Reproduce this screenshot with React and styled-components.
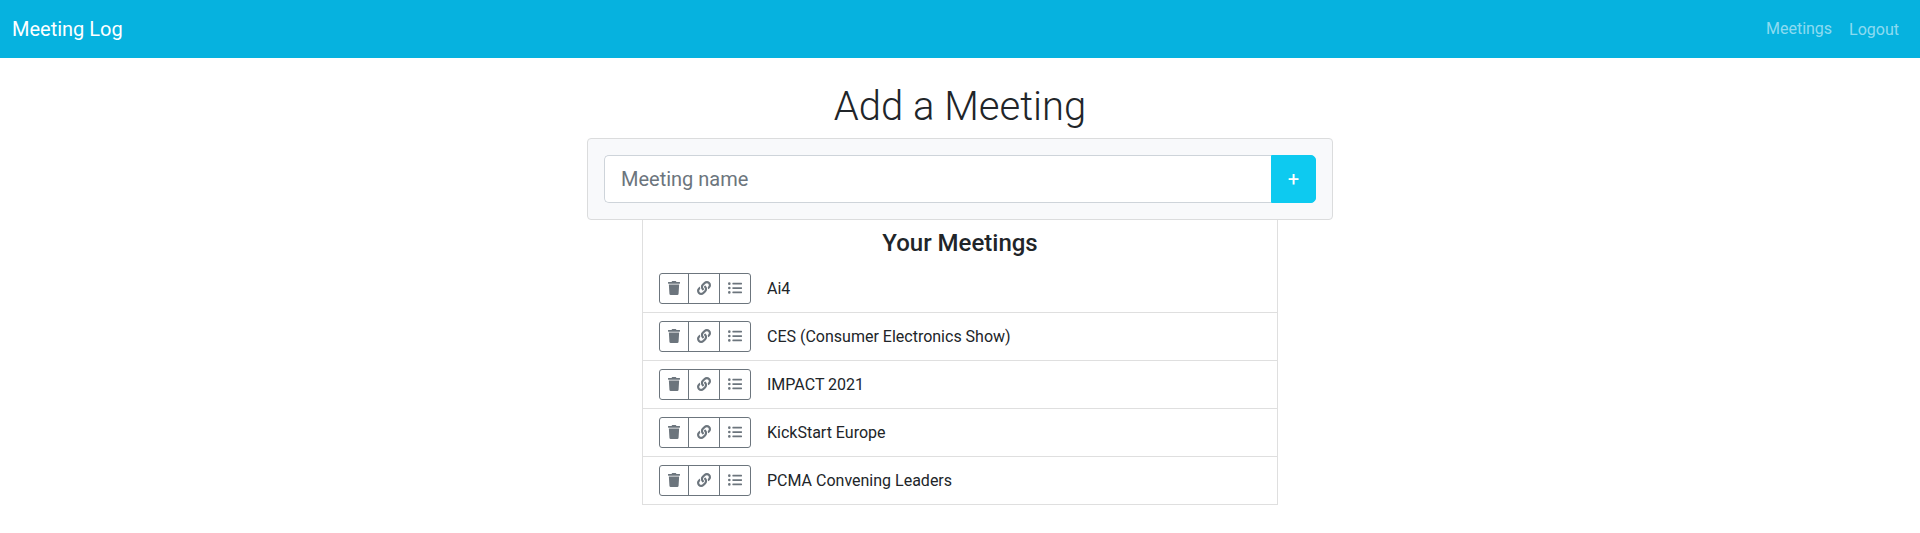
import React from 'react';
import styled, { createGlobalStyle } from 'styled-components';
import { FaTrash, FaLink, FaListUl } from 'react-icons/fa';

const meetings = [
  'Ai4',
  'CES (Consumer Electronics Show)',
  'IMPACT 2021',
  'KickStart Europe',
  'PCMA Convening Leaders',
];

const GlobalStyle = createGlobalStyle`
  *, *::before, *::after { box-sizing: border-box; }
  body {
    margin: 0;
    background: #fff;
    color: #212529;
    font-family: Roboto, "Liberation Sans", sans-serif;
    font-size: 16px;
    line-height: 24px;
  }
  button, input { font-family: inherit; }
`;

const Navbar = styled.nav`
  display: flex;
  align-items: center;
  justify-content: space-between;
  padding: 8px 12px;
  background: #06b2df;
`;

const Brand = styled.a`
  color: #fff;
  font-size: 20px;
  line-height: 30px;
  text-decoration: none;
`;

const NavItems = styled.div`
  display: flex;
  align-items: flex-start;
`;

const NavLink = styled.a`
  padding: 9px 8px 7px;
  color: rgba(255, 255, 255, 0.55);
  text-decoration: none;
`;

const LogoutButton = styled.button`
  padding: 9px 8px 7px;
  border: 1px solid transparent;
  background: transparent;
  color: rgba(255, 255, 255, 0.55);
  font-size: 16px;
  line-height: 24px;
  cursor: pointer;
`;

const Main = styled.main`
  display: flex;
  flex-direction: column;
  align-items: center;
  padding: 24px 12px;
`;

const Title = styled.h1`
  margin: 0 0 6px;
  font-size: 40px;
  font-weight: 300;
  line-height: 50px;
`;

const AddForm = styled.form`
  display: flex;
  width: 100%;
  max-width: 746px;
  padding: 16px;
  border: 1px solid #dbdcdd;
  border-radius: 4px;
  background: #f8f9fb;
`;

const NameInput = styled.input`
  flex: 1;
  min-width: 0;
  height: 48px;
  padding: 8px 16px;
  border: 1px solid #ced4da;
  border-right: 0;
  border-radius: 5px 0 0 5px;
  background: #fff;
  color: #212529;
  font-size: 20px;
  line-height: 30px;

  &::placeholder {
    color: #6c757d;
    opacity: 1;
  }
`;

const AddButton = styled.button`
  padding: 8px 16px;
  border: 1px solid #0dcaf0;
  border-radius: 0 5px 5px 0;
  background: #0dcaf0;
  color: #fff;
  font-size: 20px;
  line-height: 30px;
  cursor: pointer;
`;

const ListPanel = styled.section`
  width: 100%;
  max-width: 636px;
  padding-top: 8px;
  border: 1px solid #dfdfdf;
  border-width: 0 1px;
`;

const ListTitle = styled.h2`
  margin: 0 0 6px;
  font-size: 24px;
  font-weight: 500;
  line-height: 31px;
  text-align: center;
`;

const MeetingList = styled.ul`
  margin: 0;
  padding: 0;
  list-style: none;
`;

const MeetingRow = styled.li`
  display: flex;
  align-items: center;
  gap: 16px;
  padding: 8px 16px;
  border-bottom: 1px solid #dfdfdf;
`;

const ButtonGroup = styled.div`
  display: flex;
`;

const IconButton = styled.button`
  display: flex;
  padding: 7px 8px 8px;
  border: 1px solid #6c757d;
  background: transparent;
  color: #6c757d;
  font-size: 14px;
  cursor: pointer;

  & + & { margin-left: -1px; }
  &:first-child { border-radius: 3px 0 0 3px; }
  &:last-child { border-radius: 0 3px 3px 0; }

  svg {
    width: ${({ $iconWidth }) => $iconWidth || 14}px;
    height: 14px;
  }
`;

export default function App() {
  return (
    <>
      <GlobalStyle />
      <Navbar>
        <Brand href="#">Meeting Log</Brand>
        <NavItems>
          <NavLink href="#meetings">Meetings</NavLink>
          <LogoutButton type="button">Logout</LogoutButton>
        </NavItems>
      </Navbar>
      <Main>
        <Title>Add a Meeting</Title>
        <AddForm onSubmit={(e) => e.preventDefault()}>
          <NameInput type="text" aria-label="Meeting name" placeholder="Meeting name" />
          <AddButton type="submit" aria-label="Add meeting">+</AddButton>
        </AddForm>
        <ListPanel id="meetings">
          <ListTitle>Your Meetings</ListTitle>
          <MeetingList>
            {meetings.map((name) => (
              <MeetingRow key={name}>
                <ButtonGroup>
                  <IconButton type="button" $iconWidth={12} aria-label={`Delete ${name}`}>
                    <FaTrash preserveAspectRatio="none" />
                  </IconButton>
                  <IconButton type="button" aria-label={`Link to ${name}`}>
                    <FaLink />
                  </IconButton>
                  <IconButton type="button" aria-label={`Details of ${name}`}>
                    <FaListUl />
                  </IconButton>
                </ButtonGroup>
                <span>{name}</span>
              </MeetingRow>
            ))}
          </MeetingList>
        </ListPanel>
      </Main>
    </>
  );
}
